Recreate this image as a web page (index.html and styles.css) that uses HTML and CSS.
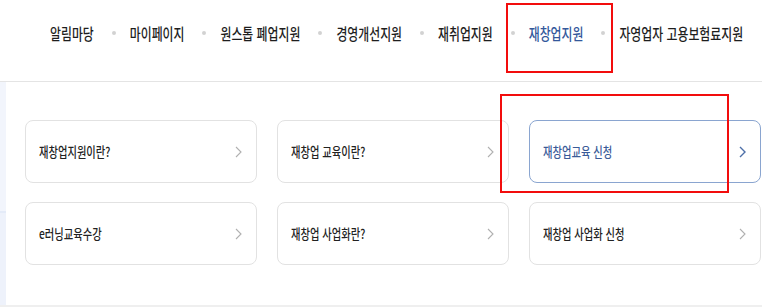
FILE: index.html
```html
<!DOCTYPE html>
<html lang="ko">
<head>
<meta charset="utf-8">
<title>재창업지원</title>
<link rel="stylesheet" href="styles.css">
</head>
<body>
<header class="gnb">
  <ul class="gnb-list">
    <li class="gnb-item"><span class="tall">알림마당</span></li>
    <li class="gnb-item"><span class="tall">마이페이지</span></li>
    <li class="gnb-item"><span class="tall">원스톱 폐업지원</span></li>
    <li class="gnb-item"><span class="tall">경영개선지원</span></li>
    <li class="gnb-item"><span class="tall">재취업지원</span></li>
    <li class="gnb-item is-active"><span class="tall">재창업지원</span></li>
    <li class="gnb-item"><span class="tall">자영업자 고용보험료지원</span></li>
  </ul>
</header>
<main class="body">
  <aside class="side"></aside>
  <section class="content">
    <div class="cards">
      <a class="card"><span class="tall">재창업지원이란?</span><svg class="chev" viewBox="0 0 7 12"><polyline points="1,1 6,6 1,11"/></svg></a>
      <a class="card"><span class="tall">재창업 교육이란?</span><svg class="chev" viewBox="0 0 7 12"><polyline points="1,1 6,6 1,11"/></svg></a>
      <a class="card is-active"><span class="tall">재창업교육 신청</span><svg class="chev" viewBox="0 0 7 12"><polyline points="1,1 6,6 1,11"/></svg></a>
      <a class="card"><span class="tall">e러닝교육수강</span><svg class="chev" viewBox="0 0 7 12"><polyline points="1,1 6,6 1,11"/></svg></a>
      <a class="card"><span class="tall">재창업 사업화란?</span><svg class="chev" viewBox="0 0 7 12"><polyline points="1,1 6,6 1,11"/></svg></a>
      <a class="card"><span class="tall">재창업 사업화 신청</span><svg class="chev" viewBox="0 0 7 12"><polyline points="1,1 6,6 1,11"/></svg></a>
    </div>
  </section>
</main>
<div class="foot"></div>
<div class="mark mark-menu"></div>
<div class="mark mark-card"></div>
</body>
</html>
```
FILE: styles.css
```css
* { box-sizing: border-box; }
html, body { margin: 0; padding: 0; }
body {
  width: 762px;
  height: 307px;
  overflow: hidden;
  background: #fff;
  font-family: "Noto Sans CJK KR", "Noto Sans", sans-serif;
  color: #222;
  position: relative;
}
.tall {
  display: inline-block;
  transform-origin: center center;
  white-space: nowrap;
}
.gnb {
  height: 82px;
  border-bottom: 1px solid #e4e4e4;
}
.gnb-list {
  list-style: none;
  margin: 0;
  padding: 24px 0 0 50px;
  display: flex;
  align-items: center;
}
.gnb-item {
  display: flex;
  align-items: center;
  font-size: 11.9px;
  font-weight: 500;
  line-height: 18px;
  color: #1e1e1e;
}
.gnb-item .tall { transform: scaleY(1.33); }
.gnb-item + .gnb-item::before {
  content: "";
  width: 4px;
  height: 4px;
  border-radius: 50%;
  background: #d2d2d2;
  margin: 0 14px 0 18px;
}
.gnb-item.is-active { color: #33589b; }
.body {
  display: flex;
  height: 223px;
}
.side {
  width: 6px;
  background: linear-gradient(#f2f5fc 0, #f2f5fc 129px, #e4ebf8 129px, #e4ebf8 131px, #eef2fb 131px);
}
.content {
  flex: 1;
  padding: 38px 0 0 19px;
}
.cards {
  display: grid;
  grid-template-columns: repeat(3, 232px);
  column-gap: 20px;
  row-gap: 19px;
}
.card {
  height: 63px;
  border: 1px solid #e2e2e2;
  border-radius: 8px;
  display: flex;
  align-items: center;
  justify-content: space-between;
  padding: 0 14px 0 13px;
  font-size: 10.3px;
  font-weight: 500;
  color: #222;
  background: #fff;
}
.card .tall { transform: scaleY(1.3); }
.chev {
  width: 7px;
  height: 12px;
  fill: none;
  stroke: #b0b0b0;
  stroke-width: 1.1;
}
.card.is-active {
  border-color: #8aa5d0;
  color: #3a5b98;
}
.card.is-active .chev { stroke: #4d6fa8; stroke-width: 1.4; }
.foot {
  height: 2px;
  background: #efefef;
}
.mark {
  position: absolute;
  border: 2px solid #f20d0d;
}
.mark-menu { left: 506px; top: 3px; width: 107px; height: 70px; }
.mark-card { left: 500px; top: 94px; width: 229px; height: 99px; }
```
